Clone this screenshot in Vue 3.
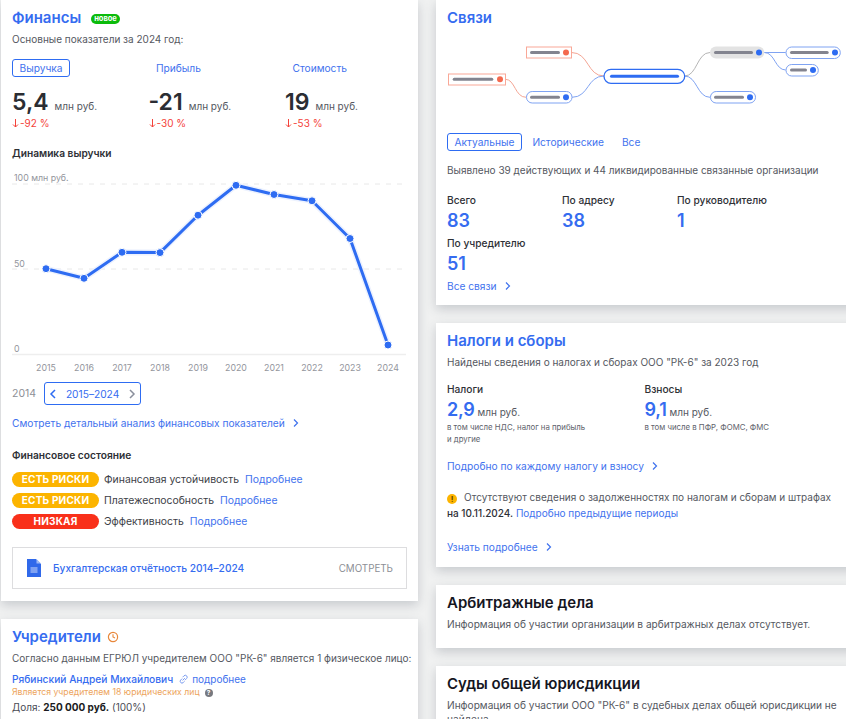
<script setup>
const metrics = [
  { tab: 'Выручка', active: true, value: '5,4', delta: '-92 %' },
  { tab: 'Прибыль', active: false, value: '-21', delta: '-30 %' },
  { tab: 'Стоимость', active: false, value: '19', delta: '-53 %' }
]
const years = [2015, 2016, 2017, 2018, 2019, 2020, 2021, 2022, 2023, 2024]
const ys = [108.7, 118.3, 92.3, 92.6, 55.2, 25.3, 34.5, 40.8, 78.5, 185]
const pts = years.map((y, i) => ({ year: y, x: 34 + i * 38, y: ys[i] }))
const line = pts.map(p => p.x + ',' + p.y).join(' ')
const states = [
  { label: 'ЕСТЬ РИСКИ', cls: 'amber', text: 'Финансовая устойчивость' },
  { label: 'ЕСТЬ РИСКИ', cls: 'amber', text: 'Платежеспособность' },
  { label: 'НИЗКАЯ', cls: 'red', text: 'Эффективность' }
]
const links = [
  { label: 'Всего', value: '83' },
  { label: 'По адресу', value: '38' },
  { label: 'По руководителю', value: '1' },
  { label: 'По учредителю', value: '51' }
]
</script>

<template>
  <div class="page">
    <div class="col left">
      <section class="card fin">
        <div class="title-row">
          <h2 class="title">Финансы</h2>
          <span class="new">новое</span>
        </div>
        <p class="sub">Основные показатели за 2024 год:</p>
        <div class="metrics">
          <div v-for="m in metrics" :key="m.tab" class="metric">
            <span class="tab" :class="{ on: m.active }">{{ m.tab }}</span>
            <div class="val"><b>{{ m.value }}</b><span>млн руб.</span></div>
            <div class="delta"><svg width="7" height="9" viewBox="0 0 7 9"><path d="M3.500 0v8M1 5.500 3.500 8 6 5.500" fill="none" stroke="#f4423a" /></svg>{{ m.delta }}</div>
          </div>
        </div>
        <h3 class="h3 dyn">Динамика выручки</h3>
        <svg class="chart" width="394" height="220" viewBox="0 0 394 220">
          <line x1="0" x2="394" y1="24" y2="24" class="grid" />
          <line x1="0" x2="394" y1="109" y2="109" class="grid" />
          <line x1="0" x2="394" y1="194.5" y2="194.5" class="axis" />
          <text x="2" y="21" class="lbl">100 млн руб.</text>
          <text x="2" y="107" class="lbl">50</text>
          <text x="2" y="192" class="lbl">0</text>
          <polyline :points="line" class="halo" />
          <polyline :points="line" class="ln" />
          <circle v-for="p in pts" :key="p.year" :cx="p.x" :cy="p.y" r="4" class="dot" />
          <text v-for="p in pts" :key="'t' + p.year" :x="p.x" y="211" text-anchor="middle" class="lbl">{{ p.year }}</text>
        </svg>
        <div class="range">
          <span class="y14">2014</span>
          <div class="pick">
            <svg width="8" height="12" viewBox="0 0 8 12"><path d="M6 2 2 6l4 4" fill="none" stroke="#2e6cf2" stroke-width="1.5" /></svg>
            <span>2015–2024</span>
            <svg width="8" height="12" viewBox="0 0 8 12"><path d="m2 2 4 4-4 4" fill="none" stroke="#8a8f9c" stroke-width="1.5" /></svg>
          </div>
        </div>
        <a class="more detail">Смотреть детальный анализ финансовых показателей
          <svg class="chev" width="8" height="10" viewBox="0 0 8 10"><path d="m2 1.500 3.500 3.500L2 8.500" /></svg>
        </a>
        <h3 class="h3 state">Финансовое состояние</h3>
        <div v-for="(s, i) in states" :key="i" class="state-row">
          <span class="pill" :class="s.cls">{{ s.label }}</span>
          <span class="st">{{ s.text }}</span>
          <a class="lnk">Подробнее</a>
        </div>
        <div class="report">
          <svg width="14" height="18" viewBox="0 0 14 18">
            <path d="M0 0h9l5 5v13H0z" fill="#3069ea" />
            <path d="M9.500 0 14 4.500H9.500z" fill="#9db9f5" />
            <path d="M3.500 9h7M3.500 11h7M3.500 13h7" stroke="#cfdcfa" stroke-width="1" />
          </svg>
          <a class="rep-t">Бухгалтерская отчётность 2014–2024</a>
          <span class="rep-s">СМОТРЕТЬ</span>
        </div>
      </section>
      <section class="card founders">
        <div class="title-row">
          <h2 class="title">Учредители</h2>
          <svg width="12" height="12" viewBox="0 0 12 12"><circle cx="6" cy="6" r="4.600" fill="none" stroke="#e8873a" stroke-width="1.200" /><path d="M6 3.200V6l2 1" fill="none" stroke="#e8873a" stroke-width="1.100" /></svg>
        </div>
        <p class="sub f1">Согласно данным ЕГРЮЛ учредителем ООО "РК-6" является 1 физическое лицо:</p>
        <div class="person">
          <a class="pname">Рябинский Андрей Михайлович</a>
          <svg width="11" height="11" viewBox="0 0 12 12"><path d="M5 7 7.500 4.500M4.500 5 2.800 6.700a2 2 0 0 0 2.800 2.800L7 8M5 3.500l1.500-1.500a2 2 0 0 1 2.900 2.900L7.500 6.800" fill="none" stroke="#6f93ee" stroke-width="1" /></svg>
          <a class="lnk pm">подробнее</a>
        </div>
        <div class="also">Является учредителем 18 юридических лиц <i class="q">?</i></div>
        <div class="share">Доля: <b>250 000 руб.</b> (100%)</div>
      </section>
    </div>

    <div class="col right">
      <section class="card rc links">
        <h2 class="title">Связи</h2>
        <svg class="tree" width="399" height="70" viewBox="0 0 399 70">
          <g fill="none" stroke-width="1">
            <path d="M124.500 12.500C142 12.500 140 36 157 36" stroke="#f4a594" />
            <path d="M58.500 39.300C68 39.300 68 57.300 79 57.300" stroke="#f4a594" />
            <path d="M125 57.300C142 57.300 140 36 157 36" stroke="#7fa3f2" />
            <path d="M237.700 36C250 36 250 12.500 263 12.500" stroke="#b5b5b5" />
            <path d="M237.700 36C250 36 250 57.300 263 57.300" stroke="#7fa3f2" />
            <path d="M317.300 12.500H338.700" stroke="#7fa3f2" />
            <path d="M317.300 12.500C328 12.500 328 30 338.700 30" stroke="#7fa3f2" />
          </g>
          <g>
            <rect x="79.500" y="7" width="45" height="11" class="nr" />
            <rect x="83" y="11" width="30" height="3" rx="1.500" class="bar" />
            <circle cx="119" cy="12.500" r="3" fill="#f4694e" />
            <rect x="1.500" y="34" width="57" height="11" class="nr" />
            <rect x="5.700" y="37.800" width="40.600" height="3" rx="1.500" class="bar" />
            <circle cx="53" cy="39.300" r="3" fill="#f4694e" />
            <rect x="79.500" y="51.500" width="45.500" height="11.500" rx="5.700" class="nb" />
            <rect x="83" y="55.800" width="30" height="3" rx="1.500" class="bar" />
            <circle cx="119" cy="57.300" r="3" fill="#2e6cf2" />
            <rect x="157" y="29.300" width="80.700" height="14" rx="7" fill="#fff" stroke="#2e6cf2" stroke-width="1.300" />
            <rect x="163" y="34.800" width="69" height="3" rx="1.500" fill="#2e6cf2" />
            <rect x="263" y="6.500" width="54.300" height="12" rx="6" fill="#e3e3e3" />
            <rect x="267" y="11" width="39" height="3" rx="1.500" class="bar" />
            <circle cx="312" cy="12.500" r="3" fill="#2e6cf2" />
            <rect x="263.500" y="51.500" width="45" height="11.500" rx="5.700" class="nb" />
            <rect x="267" y="55.800" width="30" height="3" rx="1.500" class="bar" />
            <circle cx="303" cy="57.300" r="3" fill="#2e6cf2" />
            <rect x="339" y="7" width="54.300" height="11.500" rx="5.700" class="nb" />
            <rect x="343" y="11" width="38.700" height="3" rx="1.500" class="bar" />
            <circle cx="388" cy="12.500" r="3" fill="#2e6cf2" />
            <rect x="339" y="24.500" width="32.300" height="11.500" rx="5.700" class="nb" />
            <rect x="343" y="28.500" width="17" height="3" rx="1.500" class="bar" />
            <circle cx="366" cy="30" r="3" fill="#2e6cf2" />
          </g>
        </svg>
        <div class="tabs">
          <span class="tab on">Актуальные</span>
          <span class="tab">Исторические</span>
          <span class="tab">Все</span>
        </div>
        <p class="sub found">Выявлено 39 действующих и 44 ликвидированные связанные организации</p>
        <div class="lgrid">
          <div v-for="l in links" :key="l.label" class="lcell">
            <div class="ll">{{ l.label }}</div>
            <div class="lv">{{ l.value }}</div>
          </div>
        </div>
        <a class="more all">Все связи
          <svg class="chev" width="8" height="10" viewBox="0 0 8 10"><path d="m2 1.500 3.500 3.500L2 8.500" /></svg>
        </a>
      </section>

      <section class="card rc taxes">
        <h2 class="title">Налоги и сборы</h2>
        <p class="sub tx">Найдены сведения о налогах и сборах ООО "РК-6" за 2023 год</p>
        <div class="tgrid">
          <div>
            <div class="ll">Налоги</div>
            <div class="tv"><b>2,9</b> млн руб.</div>
            <p class="note">в том числе НДС, налог на прибыль<br />и другие</p>
          </div>
          <div>
            <div class="ll">Взносы</div>
            <div class="tv"><b>9,1</b> млн руб.</div>
            <p class="note">в том числе в ПФР, ФОМС, ФМС</p>
          </div>
        </div>
        <a class="more each">Подробно по каждому налогу и взносу
          <svg class="chev" width="8" height="10" viewBox="0 0 8 10"><path d="m2 1.500 3.500 3.500L2 8.500" /></svg>
        </a>
        <p class="warn"><i class="ex">!</i>Отсутствуют сведения о задолженностях по налогам и сборам и штрафах<br /><span class="dk">на 10.11.2024.</span> <a class="lnk">Подробно предыдущие периоды</a></p>
        <a class="more know">Узнать подробнее
          <svg class="chev" width="8" height="10" viewBox="0 0 8 10"><path d="m2 1.500 3.500 3.500L2 8.500" /></svg>
        </a>
      </section>

      <section class="card rc arb">
        <h2 class="title dark">Арбитражные дела</h2>
        <p class="sub info">Информация об участии организации в арбитражных делах отсутствует.</p>
      </section>

      <section class="card rc courts">
        <h2 class="title dark">Суды общей юрисдикции</h2>
        <p class="sub info">Информация об участии ООО "РК-6" в судебных делах общей юрисдикции не найдена.</p>
      </section>
    </div>
  </div>
</template>

<style>
html, body { margin: 0; background: #f0f0f0; overflow: hidden; }
</style>

<style scoped>
.page {
  width: 846px; height: 719px; overflow: hidden; background: #f0f1f1;
  display: grid; grid-template-columns: 417px 410px; column-gap: 18px; padding-left: 1px;
  box-sizing: border-box;
  font-family: Inter, "Noto Sans", sans-serif; font-size: 10px; color: #4a4c55;
}
.col { display: flex; flex-direction: column; gap: 18px; min-width: 0; }
.card { background: #fff; box-shadow: 0 4px 10px rgba(60, 70, 85, .22); box-sizing: border-box; padding: 0 11px; }
.rc { padding: 0 22px 0 11px; width: 430px; }
h2, h3, p { margin: 0; }
a { color: #2e6cf2; }
.title { font-size: 15px; line-height: 20px; font-weight: 600; color: #356cf0; letter-spacing: 0; white-space: nowrap; }
.title.dark { color: #15161f; }
.title-row { display: flex; align-items: center; gap: 10px; }
.fin { height: 601px; padding-top: 8px; }
.new { background: #0bbb0b; color: #fff; font-size: 7.500px; font-weight: 700; line-height: 9px; padding: 0 3px 1px; border-radius: 5px; margin-top: 1px; }
.sub { font-size: 10px; line-height: 14px; color: #555861; }
.fin .sub { margin-top: 4px; }
.metrics { display: flex; margin-top: 13px; }
.metric { flex: 0 0 136.500px; }
.tab { display: inline-block; font-size: 10.200px; line-height: 14px; color: #3f72ee; border: 1px solid transparent; border-radius: 3px; padding: 1px 6.500px; white-space: nowrap; }
.tab.on { border-color: #2e6cf2; }
.val { display: flex; align-items: baseline; gap: 6px; margin-top: 13px; line-height: 24px; font-size: 10px; color: #555861; }
.val b { font-size: 23px; font-weight: 600; color: #2b2d33; }
.delta { display: flex; align-items: center; gap: 1px; font-size: 10px; line-height: 13px; color: #f4423a; margin-top: -1px; }
.h3 { font-size: 10.200px; line-height: 14px; font-weight: 600; color: #2e3036; }
.dyn { margin-top: 16px; }
.chart { display: block; margin-top: 0; }
.grid { stroke: #e8e8e8; stroke-dasharray: 5 6; }
.axis { stroke: #eeeeee; stroke-width: 1.500; }
.lbl { font-size: 8.800px; fill: #93959c; font-family: Inter, sans-serif; }
.halo { fill: none; stroke: #edf2fe; stroke-width: 6; }
.ln { fill: none; stroke: #2e6cf2; stroke-width: 3; stroke-linejoin: round; }
.dot { fill: #2e6cf2; stroke: #fff; stroke-width: 1; }
.range { display: flex; align-items: center; gap: 8px; margin-top: 2px; }
.y14 { font-size: 10.500px; color: #8d8f96; }
.pick { display: flex; align-items: center; justify-content: space-between; width: 97px; height: 23px; box-sizing: border-box; border: 1px solid #2e6cf2; border-radius: 3px; padding: 0 4px; font-size: 10.200px; color: #356cf0; }
.more { display: flex; align-items: center; gap: 7px; font-size: 10.200px; line-height: 14px; color: #3f72ee; }
.chev { fill: none; stroke: #3f72ee; stroke-width: 1.200; }
.detail { margin-top: 11px; }
.state { margin-top: 18px; }
.state-row { display: flex; align-items: center; height: 15px; margin-top: 6px; font-size: 10.400px; color: #3c3e46; }
.state + .state-row { margin-top: 10px; }
.pill { width: 87px; text-align: center; border-radius: 8px; font-size: 10px; font-weight: 700; line-height: 15px; color: #fff; letter-spacing: .2px; margin-right: 5px; }
.amber { background: #fcb400; }
.red { background: #f9301a; }
.st { margin-right: 6px; }
.lnk { color: #3f72ee; font-size: 10.400px; }
.report { display: flex; align-items: center; height: 42px; margin-top: 18px; border: 1px solid #dddddf; box-sizing: border-box; padding: 0 13px 0 14px; }
.rep-t { margin-left: 12px; font-size: 10.200px; color: #356cf0; font-weight: 500; flex: 1; }
.rep-s { font-size: 9.800px; color: #8d8f96; }
.founders { height: 120px; padding-top: 8px; }
.founders .title-row { gap: 6px; }
.f1 { margin-top: 4px; white-space: nowrap; }
.person { display: flex; align-items: center; gap: 3px; margin-top: 7px; line-height: 14px; }
.pm { font-size: 10px; }
.pname { font-size: 10.200px; color: #356cf0; font-weight: 500; margin-right: 2px; }
.also { display: flex; align-items: center; gap: 5px; font-size: 8.700px; line-height: 13px; color: #eda45c; }
.q { display: inline-block; width: 8px; height: 8px; line-height: 8px; border-radius: 50%; background: #77797f; color: #fff; text-align: center; font-style: normal; font-size: 6.500px; font-weight: 700; }
.share { font-size: 10px; line-height: 15px; margin-top: 1px; }
.share b { color: #1b1c22; font-weight: 700; }
.links { height: 305px; padding-top: 8px; }
.tree { display: block; margin-top: 12px; }
.nr { fill: #fff; stroke: #f9a897; stroke-width: 1; }
.nb { fill: #fff; stroke: #7fa3f2; stroke-width: 1; }
.bar { fill: #83848f; }
.tabs { display: flex; gap: 3px; margin-top: 23px; }
.found { margin-top: 12px; white-space: nowrap; }
.lgrid { display: grid; grid-template-columns: repeat(3, 115px); margin-top: 16px; }
.lcell { height: 43px; }
.ll { font-size: 10.200px; line-height: 14px; font-weight: 500; color: #2e3036; white-space: nowrap; }
.lv { font-size: 18px; line-height: 28px; font-weight: 600; color: #356cf0; }
.all { margin-top: 0; }
.taxes { height: 244px; padding-top: 8px; }
.tx { margin-top: 4px; }
.tgrid { display: grid; grid-template-columns: 197.500px 1fr; margin-top: 13px; }
.tv { font-size: 10px; line-height: 22px; color: #555861; margin-top: 3px; }
.tv b { font-size: 18px; font-weight: 600; color: #356cf0; letter-spacing: -.2px; }
.note { font-size: 7.800px; line-height: 12px; color: #60626b; margin-top: -2px; }
.each { margin-top: 14px; }
.warn { font-size: 10px; line-height: 16px; color: #555861; margin-top: 16px; white-space: nowrap; }
.ex { display: inline-block; width: 10px; height: 10px; line-height: 10px; background: #fcb400; color: #5c4300; border-radius: 50%; text-align: center; font-style: normal; font-size: 8px; font-weight: 700; margin-right: 7px; vertical-align: -1px; }
.dk { color: #2e3036; font-weight: 500; }
.warn .lnk { font-size: 10px; }
.know { margin-top: 19px; }
.arb { height: 63px; padding-top: 8px; }
.info { margin-top: 4px; font-size: 10.150px; }
.courts { height: 90px; padding-top: 8px; }
</style>
